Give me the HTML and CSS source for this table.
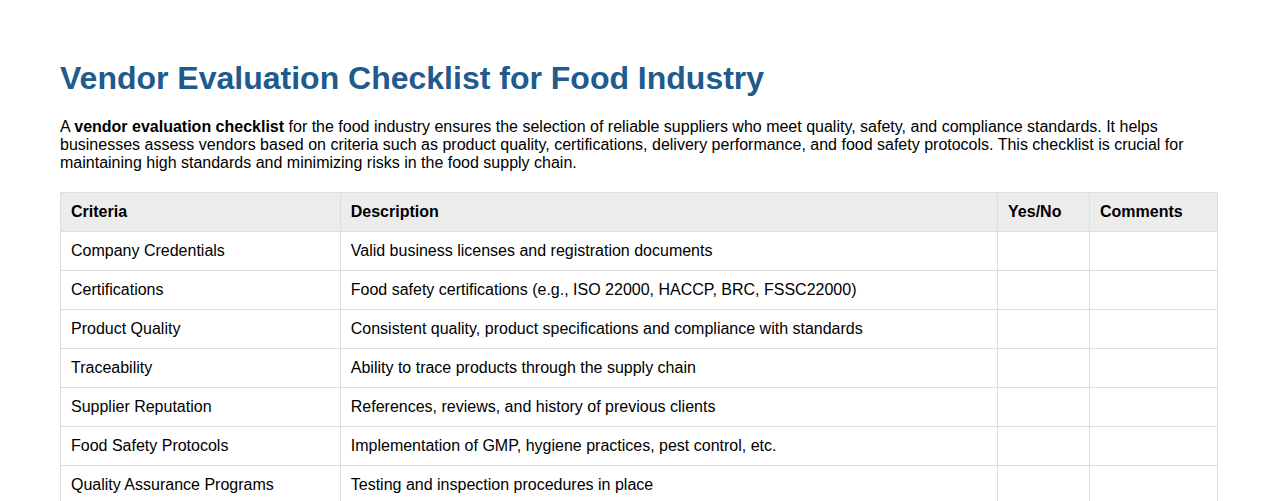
FILE: index.html
```html
<!DOCTYPE html>
<html lang="en">
<head>
<meta charset="utf-8">
<title>Vendor Evaluation Checklist for Food Industry</title>
<link rel="stylesheet" href="styles.css">
</head>
<body>
<h1 class="title">Vendor Evaluation Checklist for Food Industry</h1>
<p class="intro">A <strong>vendor evaluation checklist</strong> for the food industry ensures the selection of reliable suppliers who meet quality, safety, and compliance standards. It helps businesses assess vendors based on criteria such as product quality, certifications, delivery performance, and food safety protocols. This checklist is crucial for maintaining high standards and minimizing risks in the food supply chain.</p>
<table class="checklist">
<colgroup>
<col class="c-criteria"><col class="c-desc"><col class="c-yes"><col class="c-comments">
</colgroup>
<thead>
<tr><th>Criteria</th><th>Description</th><th>Yes/No</th><th>Comments</th></tr>
</thead>
<tbody>
<tr><td>Company Credentials</td><td>Valid business licenses and registration documents</td><td></td><td></td></tr>
<tr><td>Certifications</td><td>Food safety certifications (e.g., ISO 22000, HACCP, BRC, FSSC22000)</td><td></td><td></td></tr>
<tr><td>Product Quality</td><td>Consistent quality, product specifications and compliance with standards</td><td></td><td></td></tr>
<tr><td>Traceability</td><td>Ability to trace products through the supply chain</td><td></td><td></td></tr>
<tr><td>Supplier Reputation</td><td>References, reviews, and history of previous clients</td><td></td><td></td></tr>
<tr><td>Food Safety Protocols</td><td>Implementation of GMP, hygiene practices, pest control, etc.</td><td></td><td></td></tr>
<tr><td>Quality Assurance Programs</td><td>Testing and inspection procedures in place</td><td></td><td></td></tr>
</tbody>
</table>
</body>
</html>
```

FILE: styles.css
```css
html, body {
  margin: 0;
  padding: 0;
  background: #fff;
}
body {
  font-family: "Liberation Sans", Arial, sans-serif;
  color: #000;
  padding: 39px 60px 40px;
  font-size: 16px;
}
.title {
  font-size: 32px;
  font-weight: bold;
  color: #215a8c;
  margin: 21px 0 21px;
  line-height: 37px;
}
.intro {
  margin: 0 0 20px;
  line-height: 18px;
}
.checklist {
  width: 100%;
  border-collapse: collapse;
}
.c-criteria { width: 280px; }
.c-desc { width: 658px; }
.c-yes { width: 92px; }
.c-comments { width: 128px; }
.checklist th, .checklist td {
  border: 1px solid #dddddd;
  padding: 10px;
  height: 18px;
  line-height: 18px;
  text-align: left;
  vertical-align: middle;
}
.checklist th {
  background: #ececec;
  font-weight: bold;
}
```
